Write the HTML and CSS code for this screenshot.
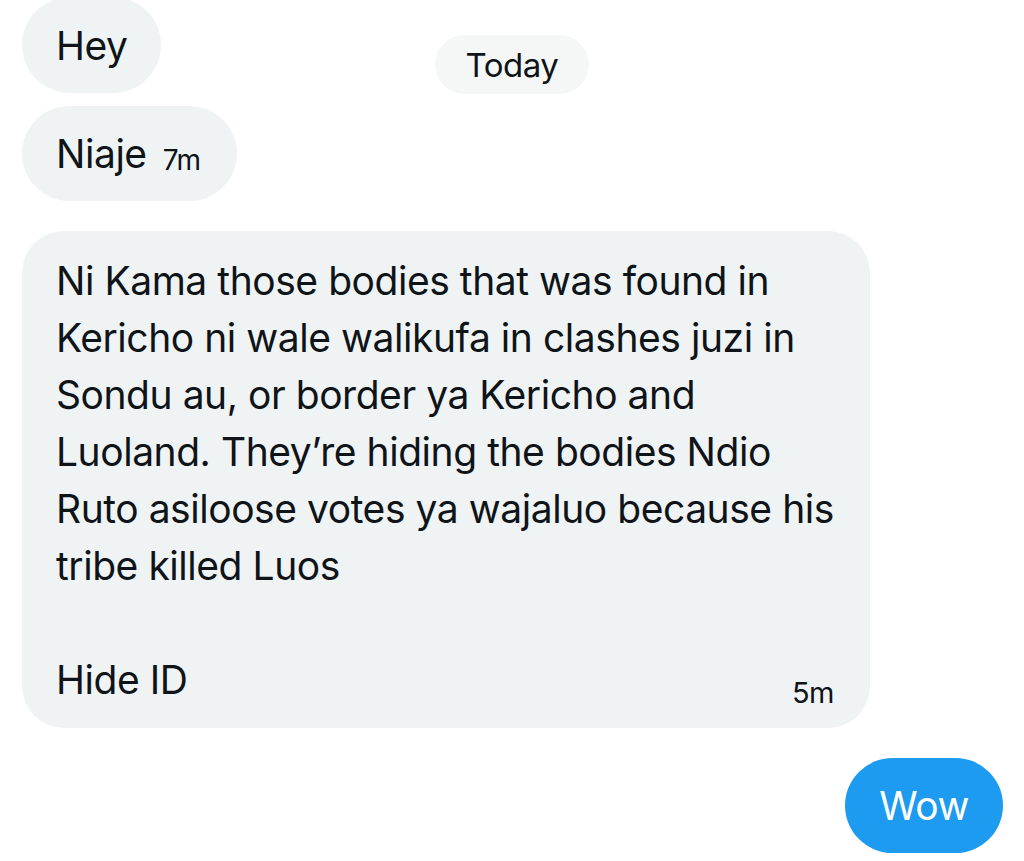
FILE: index.html
```html
<!DOCTYPE html>
<html lang="en">
<head>
<meta charset="utf-8">
<title>Messages</title>
<link rel="stylesheet" href="styles.css">
</head>
<body>
<main class="chat">
  <div class="top-row">
    <div class="bubble pill received hey">Hey</div>
    <div class="date-pill">Today</div>
  </div>
  <div class="bubble pill received niaje">Niaje <span class="time small">7m</span></div>
  <div class="bubble received long">
    <p class="long-text">Ni Kama those bodies that was found in<br>Kericho ni wale walikufa in clashes juzi in<br>Sondu au, or border ya Kericho and<br>Luoland. They’re hiding the bodies Ndio<br>Ruto asiloose votes ya wajaluo because his<br>tribe killed Luos<br>&nbsp;</p>
    <div class="last-row">
      <span>Hide ID</span>
      <span class="time">5m</span>
    </div>
  </div>
  <div class="sent-row">
    <div class="bubble pill sent">Wow</div>
  </div>
</main>
</body>
</html>
```
FILE: styles.css
```css
* { box-sizing: border-box; }
html, body {
  margin: 0;
  padding: 0;
  background: #ffffff;
}
body {
  font-family: Inter, "Noto Sans", sans-serif;
  color: #0f1419;
  width: 1024px;
  height: 861px;
  overflow: hidden;
}
.chat {
  display: flex;
  flex-direction: column;
  align-items: flex-start;
  padding: 0 21px 0 22px;
  margin-top: -3px;
}
.top-row {
  display: grid;
  grid-template-columns: 1fr auto 1fr;
  width: 1024px;
  margin-left: -22px;
  align-items: start;
}
.top-row .hey {
  grid-column: 1;
  justify-self: start;
  margin-left: 22px;
  padding-right: 33px;
}
.date-pill {
  grid-column: 2;
  margin-top: 38px;
  height: 59px;
  padding: 0 31px;
  border-radius: 30px;
  background: #f5f7f7;
  font-size: 33px;
  letter-spacing: -0.5px;
  display: flex;
  align-items: center;
}
.bubble {
  background: #eff3f4;
  font-size: 39px;
  letter-spacing: -0.45px;
}
.pill {
  height: 96px;
  border-radius: 48px;
  padding: 0 35px 0 34px;
  display: flex;
  align-items: center;
}
.niaje {
  margin-top: 12px;
  height: 95px;
  padding-right: 36px;
}
.time {
  font-size: 29px;
  letter-spacing: -0.5px;
}
.time.small {
  font-size: 28px;
  margin-left: 16px;
  align-self: center;
  padding-top: 12px;
}
.long {
  margin-top: 30px;
  width: 848px;
  border-radius: 42px;
  padding: 21px 36px 20px 34px;
}
.long-text {
  margin: 0;
  line-height: 57px;
}
.last-row {
  display: flex;
  justify-content: space-between;
  align-items: flex-end;
  line-height: 57px;
}
.last-row .time {
  line-height: 30px;
}
.sent-row {
  align-self: stretch;
  display: flex;
  justify-content: flex-end;
  margin-top: 30px;
}
.sent {
  background: #1d9bf0;
  color: #ffffff;
  height: 95px;
  padding: 0 34px;
}
```
